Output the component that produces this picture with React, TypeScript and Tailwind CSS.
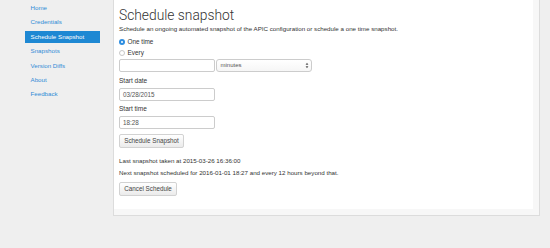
import { useState } from 'react'

const navItems = ['Home', 'Credentials', 'Schedule Snapshot', 'Snapshots', 'Version Diffs', 'About', 'Feedback']

function Radio({ checked }: { checked?: boolean }) {
  return checked ? (
    <span className="w-[6px] h-[6px] rounded-full bg-[#2f8ee0] flex items-center justify-center">
      <span className="w-[2px] h-[2px] rounded-full bg-white" />
    </span>
  ) : (
    <span className="w-[6px] h-[6px] rounded-full border border-[#c8c8c8] bg-white" />
  )
}

function Btn({ label, w }: { label: string; w: string }) {
  return (
    <button type="button"
      className={`${w} h-[14px] border border-[#d2d2d2] rounded-[2px] bg-gradient-to-b from-white to-[#ebebeb] text-[6.3px] text-[#444] leading-none flex items-center justify-center`}>
      {label}
    </button>
  )
}

export default function App() {
  const [mode, setMode] = useState<'once' | 'every'>('once')
  return (
    <div className="w-[550px] h-[248px] bg-[#efefef] flex text-[#333]" style={{ fontFamily: '"Liberation Sans", Arial, sans-serif' }}>
      <nav className="w-[113px] pl-[25px] pr-[13px] pt-[2px] flex flex-col gap-[2.4px]">
        {navItems.map(n => (
          <a key={n} href="#"
            className={`h-[12px] pl-[5.5px] text-[6.2px] leading-[12px] ${n === 'Schedule Snapshot' ? 'bg-[#1e88d3] text-white' : 'text-[#2f8bd6]'}`}>
            {n}
          </a>
        ))}
      </nav>
      <div className="w-[427px] self-start border border-t-0 border-[#dcdcdc] bg-[#f7f7f7] pr-[6px] pb-[6px]">
        <div className="h-[209px] bg-white pl-[5px] pt-[6px]">
          <h1 className="text-[13.8px] leading-[18px] font-light text-[#333]" style={{ fontFamily: 'Roboto, "Liberation Sans", sans-serif' }}>
            Schedule snapshot
          </h1>
          <p className="text-[6.2px] leading-[10px]">
            Schedule an ongoing automated snapshot of the APIC configuration or schedule a one time snapshot.
          </p>
          <label className="mt-[2px] h-[11px] flex items-center gap-[2.5px] text-[6.4px]" onClick={() => setMode('once')}>
            <Radio checked={mode === 'once'} /> One time
          </label>
          <label className="h-[11px] flex items-center gap-[2.5px] text-[6.4px]" onClick={() => setMode('every')}>
            <Radio checked={mode === 'every'} /> Every
          </label>
          <div className="mt-[1px] flex gap-[1px]">
            <div className="w-[96px] h-[13px] border border-[#cccccc] rounded-[2px] bg-white" />
            <div className="w-[96px] h-[13px] border border-[#cccccc] rounded-[3px] bg-gradient-to-b from-white to-[#f6f6f6] flex items-center justify-between pl-[3.5px] pr-[2.5px]">
              <span className="text-[6px] text-[#555]">minutes</span>
              <svg width="4" height="7" viewBox="0 0 4 7">
                <path d="M2 0.8 L3.4 2.7 L0.6 2.7 Z M2 6.2 L3.4 4.3 L0.6 4.3 Z" fill="#555" />
              </svg>
            </div>
          </div>
          <div className="mt-[4px] h-[10px] text-[6.5px] leading-[10px]">Start date</div>
          <div className="mt-[2px] w-[96px] h-[13px] border border-[#cccccc] rounded-[2px] bg-white text-[6.3px] text-[#555] pl-[3px] flex items-center">03/28/2015</div>
          <div className="mt-[3.3px] h-[10px] text-[6.5px] leading-[10px]">Start time</div>
          <div className="mt-[1.7px] w-[96px] h-[13px] border border-[#cccccc] rounded-[2px] bg-white text-[6.3px] text-[#555] pl-[3px] flex items-center">18:28</div>
          <div className="mt-[5px]">
            <Btn label="Schedule Snapshot" w="w-[65px]" />
          </div>
          <div className="mt-[7.7px] h-[10px] text-[6.2px] leading-[10px]">Last snapshot taken at 2015-03-26 16:36:00</div>
          <div className="mt-[2.6px] h-[10px] text-[6.2px] leading-[10px]">Next snapshot scheduled for 2016-01-01 18:27 and every 12 hours beyond that.</div>
          <div className="mt-[4px]">
            <Btn label="Cancel Schedule" w="w-[58px]" />
          </div>
        </div>
      </div>
    </div>
  )
}
